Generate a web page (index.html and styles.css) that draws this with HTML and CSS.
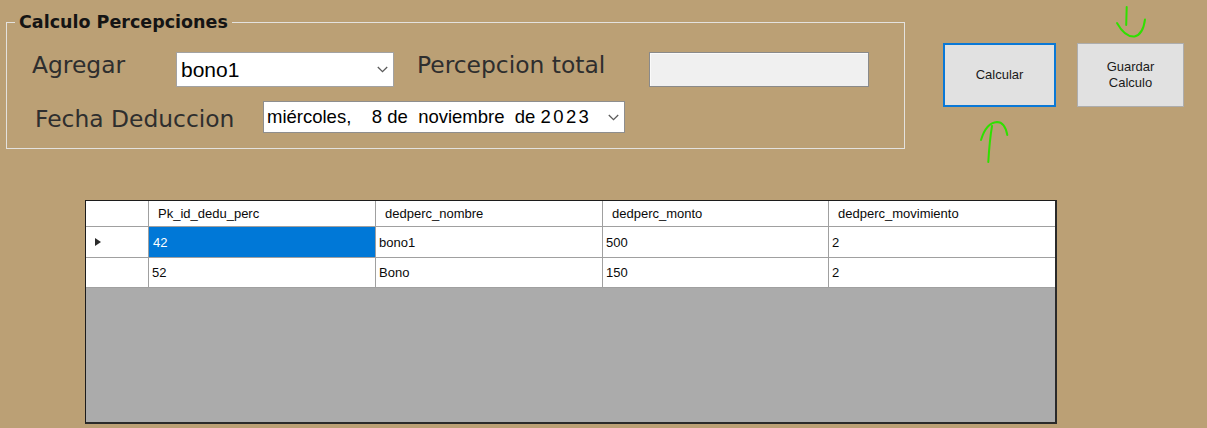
FILE: index.html
```html
<!DOCTYPE html>
<html lang="es">
<head>
<meta charset="utf-8">
<title>Calculo Percepciones</title>
<link rel="stylesheet" href="styles.css">
</head>
<body>
<div class="page">
  <div class="top">
    <fieldset class="group">
      <legend class="group-title">Calculo Percepciones</legend>
      <div class="row row-one">
        <span class="lbl lbl-agregar">Agregar</span>
        <div class="combo">
          <span class="combo-text">bono1</span>
          <svg class="chev" width="11" height="7" viewBox="0 0 11 7"><path d="M0.8 1 L5.5 5.6 L10.2 1" fill="none" stroke="#5a5a5a" stroke-width="1.3"/></svg>
        </div>
        <span class="lbl lbl-total">Percepcion total</span>
        <div class="textbox"></div>
      </div>
      <div class="row row-two">
        <span class="lbl lbl-fecha">Fecha Deduccion</span>
        <div class="picker">
          <span class="picker-text">miércoles,    8 de  noviembre  de <span class="year">2023</span></span>
          <svg class="chev" width="11" height="7" viewBox="0 0 11 7"><path d="M0.8 1 L5.5 5.6 L10.2 1" fill="none" stroke="#5a5a5a" stroke-width="1.3"/></svg>
        </div>
      </div>
    </fieldset>
    <div class="buttons">
      <button class="btn btn-calc">Calcular</button>
      <button class="btn btn-save">Guardar<br>Calculo</button>
    </div>
  </div>

  <div class="grid">
    <div class="table">
      <div class="cell head rowhead"></div>
      <div class="cell head">Pk_id_dedu_perc</div>
      <div class="cell head">dedperc_nombre</div>
      <div class="cell head">dedperc_monto</div>
      <div class="cell head last">dedperc_movimiento</div>

      <div class="cell rowhead"><span class="current"></span></div>
      <div class="cell selected">42</div>
      <div class="cell">bono1</div>
      <div class="cell">500</div>
      <div class="cell last">2</div>

      <div class="cell rowhead"></div>
      <div class="cell">52</div>
      <div class="cell">Bono</div>
      <div class="cell">150</div>
      <div class="cell last">2</div>
    </div>
  </div>

  <svg class="annot" width="1207" height="428" viewBox="0 0 1207 428">
    <g fill="none" stroke="#2fe000" stroke-width="2" stroke-linecap="round">
      <path d="M1126.7 7 L1126.2 25"/>
      <path d="M1117 23 C1122 32 1128 37 1134.5 36.5 C1141 35 1144 27 1145 19.5"/>
      <path d="M988.3 162 C989 150 990 138 992 126"/>
      <path d="M981 140 C984 130 989 122.5 997 122 C1003 122 1006 128 1007.3 135"/>
    </g>
  </svg>
</div>
</body>
</html>
```

FILE: styles.css
```css
html, body {
  margin: 0;
  padding: 0;
}

body {
  background: #bba075;
  width: 1207px;
  height: 428px;
  overflow: hidden;
  font-family: "Liberation Sans", Arial, sans-serif;
}

.page {
  position: relative;
  width: 1207px;
  height: 428px;
}

.top {
  display: flex;
  align-items: flex-start;
}

.group {
  box-sizing: border-box;
  width: 899px;
  margin: 12px 0 0 6px;
  padding: 20px 0 15px 0;
  border: 1px solid #e4e2de;
  min-width: 0;
}

.group-title {
  margin-left: 8px;
  padding: 0 4px;
  font-family: "DejaVu Sans", sans-serif;
  font-weight: bold;
  font-size: 17.5px;
  line-height: 20px;
  color: #141414;
}

.row {
  display: flex;
  align-items: flex-start;
}

.row-two {
  margin-top: 14px;
}

.lbl {
  font-family: "DejaVu Sans", sans-serif;
  font-size: 23.4px;
  line-height: 28px;
  color: #2e2e2e;
  white-space: nowrap;
}

.lbl-agregar {
  width: 144px;
  margin-left: 25px;
  margin-top: -1px;
}

.lbl-total {
  width: 232px;
  margin-left: 23px;
  margin-top: -1px;
}

.lbl-fecha {
  width: 228px;
  margin-left: 28px;
  margin-top: 4px;
}

.combo {
  box-sizing: border-box;
  width: 218px;
  height: 35px;
  border: 1px solid #a2a2a2;
  background: #ffffff;
  display: flex;
  align-items: center;
  justify-content: space-between;
  padding: 0 3px 0 4px;
}

.combo-text {
  font-size: 21px;
  color: #000;
}

.chev {
  display: block;
  margin-right: 2px;
}

.textbox {
  box-sizing: border-box;
  width: 220px;
  height: 35px;
  border: 1px solid #8a8a8a;
  box-shadow: inset 1px 1px 0 #fafafa;
  background: #f0f0f0;
}

.picker {
  box-sizing: border-box;
  width: 362px;
  height: 32px;
  border: 1px solid #8e8e8e;
  background: #ffffff;
  display: flex;
  align-items: center;
  justify-content: space-between;
  padding: 0 3px 0 3px;
}

.picker-text {
  font-size: 18.5px;
  white-space: pre;
  color: #000;
}

.year {
  letter-spacing: 2.4px;
}

.buttons {
  display: flex;
  gap: 21px;
  margin: 43px 0 0 38px;
}

.btn {
  box-sizing: border-box;
  height: 64px;
  margin: 0;
  padding: 0;
  background: #e1e1e1;
  font-family: "Liberation Sans", Arial, sans-serif;
  font-size: 13px;
  line-height: 16px;
  color: #1a1a1a;
}

.btn-calc {
  width: 113px;
  border: 2px solid #0a78d6;
}

.btn-save {
  width: 107px;
  border: 1px solid #adadad;
}

.grid {
  box-sizing: border-box;
  width: 972px;
  height: 224px;
  margin: 51px 0 0 85px;
  border-top: 1px solid #1c1c1c;
  border-left: 1px solid #1c1c1c;
  border-right: 2px solid #2a2a2a;
  border-bottom: 2px solid #2a2a2a;
  background: #ababab;
}

.table {
  display: grid;
  grid-template-columns: 63px 227px 227px 226px 226px;
  grid-template-rows: 26px 31px 30px;
}

.cell {
  box-sizing: border-box;
  background: #ffffff;
  border-right: 1px solid #a0a0a0;
  border-bottom: 1px solid #a0a0a0;
  font-size: 13px;
  color: #0a0a0a;
  padding-left: 3px;
  display: flex;
  align-items: center;
  white-space: nowrap;
}

.cell.head {
  padding-left: 9px;
  padding-bottom: 1px;
}

.cell.last {
  border-right: none;
}

.cell.rowhead {
  padding-left: 0;
}

.cell.selected {
  background: #0078d7;
  color: #ffffff;
  padding-left: 4px;
}

.current {
  display: block;
  width: 0;
  height: 0;
  margin-left: 9px;
  border-left: 6px solid #2a2a2a;
  border-top: 4.5px solid transparent;
  border-bottom: 4.5px solid transparent;
}

.annot {
  position: absolute;
  left: 0;
  top: 0;
  pointer-events: none;
}
```
